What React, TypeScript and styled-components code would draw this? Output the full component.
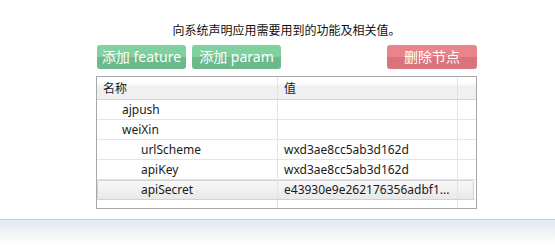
import React from "react";
import styled, { createGlobalStyle } from "styled-components";

const Global = createGlobalStyle`
  html, body { margin: 0; padding: 0; background: #fff; }
  body {
    font-family: "Noto Sans", "Noto Sans CJK SC", sans-serif;
    color: #222;
  }
`;

const Page = styled.div`
  width: 555px;
  height: 250px;
  display: flex;
  flex-direction: column;
  overflow: hidden;
`;

const Content = styled.div`
  width: 381px;
  margin-left: 96px;
  padding-top: 21px;
  display: flex;
  flex-direction: column;
`;

const Title = styled.div`
  text-align: center;
  font-family: "Noto Sans CJK SC", sans-serif;
  font-size: 12px;
  line-height: 17px;
  color: #111;
`;

const Toolbar = styled.div`
  display: flex;
  gap: 6px;
  margin-top: 7px;
  padding-left: 1px;
`;

const Button = styled.button<{ $tone: "green" | "red"; $w: number; $push?: boolean }>`
  width: ${(p) => p.$w}px;
  height: 24px;
  border: none;
  border-radius: 3px;
  padding: 0;
  margin-left: ${(p) => (p.$push ? "auto" : "0")};
  color: #fff;
  font-family: "Noto Sans", "Noto Sans CJK SC", sans-serif;
  font-size: 14px;
  line-height: 24px;
  background: ${(p) =>
    p.$tone === "green"
      ? "linear-gradient(#80d0a0 0, #80d0a0 50%, #6bb98d 50%, #6bb98d 100%)"
      : "linear-gradient(#e8848a 0, #e8848a 50%, #d9747c 50%, #d9747c 100%)"};
`;

const Table = styled.div`
  margin-top: 7px;
  height: 131px;
  border: 1px solid #a8a8a8;
  display: flex;
  flex-direction: column;
`;

const HeaderRow = styled.div`
  display: flex;
  height: 23px;
  background: linear-gradient(#ffffff 0, #ffffff 25%, #f0f0f0 45%, #f0f0f0 100%);
  border-bottom: 1px solid #d5d5d5;
  box-sizing: border-box;
`;

const Row = styled.div`
  display: flex;
  height: 20px;
  box-sizing: border-box;
  border-bottom: 1px solid #e4e4e4;
  position: relative;
`;

const Highlight = styled.div`
  position: absolute;
  left: 0;
  right: 2px;
  top: 0;
  bottom: -1px;
  border: 1px solid #d2d2d2;
  border-radius: 2px;
  background: linear-gradient(#f8f8f8, #e9e9e9);
  box-sizing: border-box;
`;

const Filler = styled.div`
  display: flex;
  flex: 1;
`;

const Cell = styled.div<{ $w: number; $indent?: number; $head?: boolean }>`
  width: ${(p) => p.$w}px;
  flex: ${(p) => (p.$w ? "none" : 1)};
  box-sizing: border-box;
  border-right: 1px solid #e4e4e4;
  padding-left: ${(p) => 6 + (p.$indent || 0) * 19}px;
  white-space: nowrap;
  overflow: hidden;
  line-height: 20px;
  font-family: ${(p) =>
    p.$head ? '"Noto Sans CJK SC", sans-serif' : '"Noto Sans", "Noto Sans CJK SC", sans-serif'};
  font-size: 12px;
  color: #1a1a1a;
  position: relative;
  &:last-child { border-right: none; }
`;

const HeadCell = styled(Cell)`
  line-height: 22px;
  border-right-color: #e2e2e2;
`;

const Band = styled.div`
  margin-top: 10px;
  flex: 1;
  border-top: 1px solid #c9d2df;
  background: linear-gradient(#e3e9f2, #ffffff 85%);
`;

const rows = [
  { name: "ajpush", value: "", indent: 1 },
  { name: "weiXin", value: "", indent: 1 },
  { name: "urlScheme", value: "wxd3ae8cc5ab3d162d", indent: 2 },
  { name: "apiKey", value: "wxd3ae8cc5ab3d162d", indent: 2 },
  { name: "apiSecret", value: "e43930e9e262176356adbf1...", indent: 2, selected: true },
];

export default function App() {
  return (
    <Page>
      <Global />
      <Content>
        <Title>向系统声明应用需要用到的功能及相关值。</Title>
        <Toolbar>
          <Button $tone="green" $w={89}>添加 feature</Button>
          <Button $tone="green" $w={89}>添加 param</Button>
          <Button $tone="red" $w={90} $push>删除节点</Button>
        </Toolbar>
        <Table>
          <HeaderRow>
            <HeadCell $w={181} $head>名称</HeadCell>
            <HeadCell $w={180} $head>值</HeadCell>
            <HeadCell $w={0} $head />
          </HeaderRow>
          {rows.map((r) => (
            <Row key={r.name}>
              {r.selected && <Highlight />}
              <Cell $w={181} $indent={r.indent}>{r.name}</Cell>
              <Cell $w={180}>{r.value}</Cell>
              <Cell $w={0} />
            </Row>
          ))}
          <Filler>
            <Cell $w={181} />
            <Cell $w={180} />
            <Cell $w={0} />
          </Filler>
        </Table>
      </Content>
      <Band />
    </Page>
  );
}
